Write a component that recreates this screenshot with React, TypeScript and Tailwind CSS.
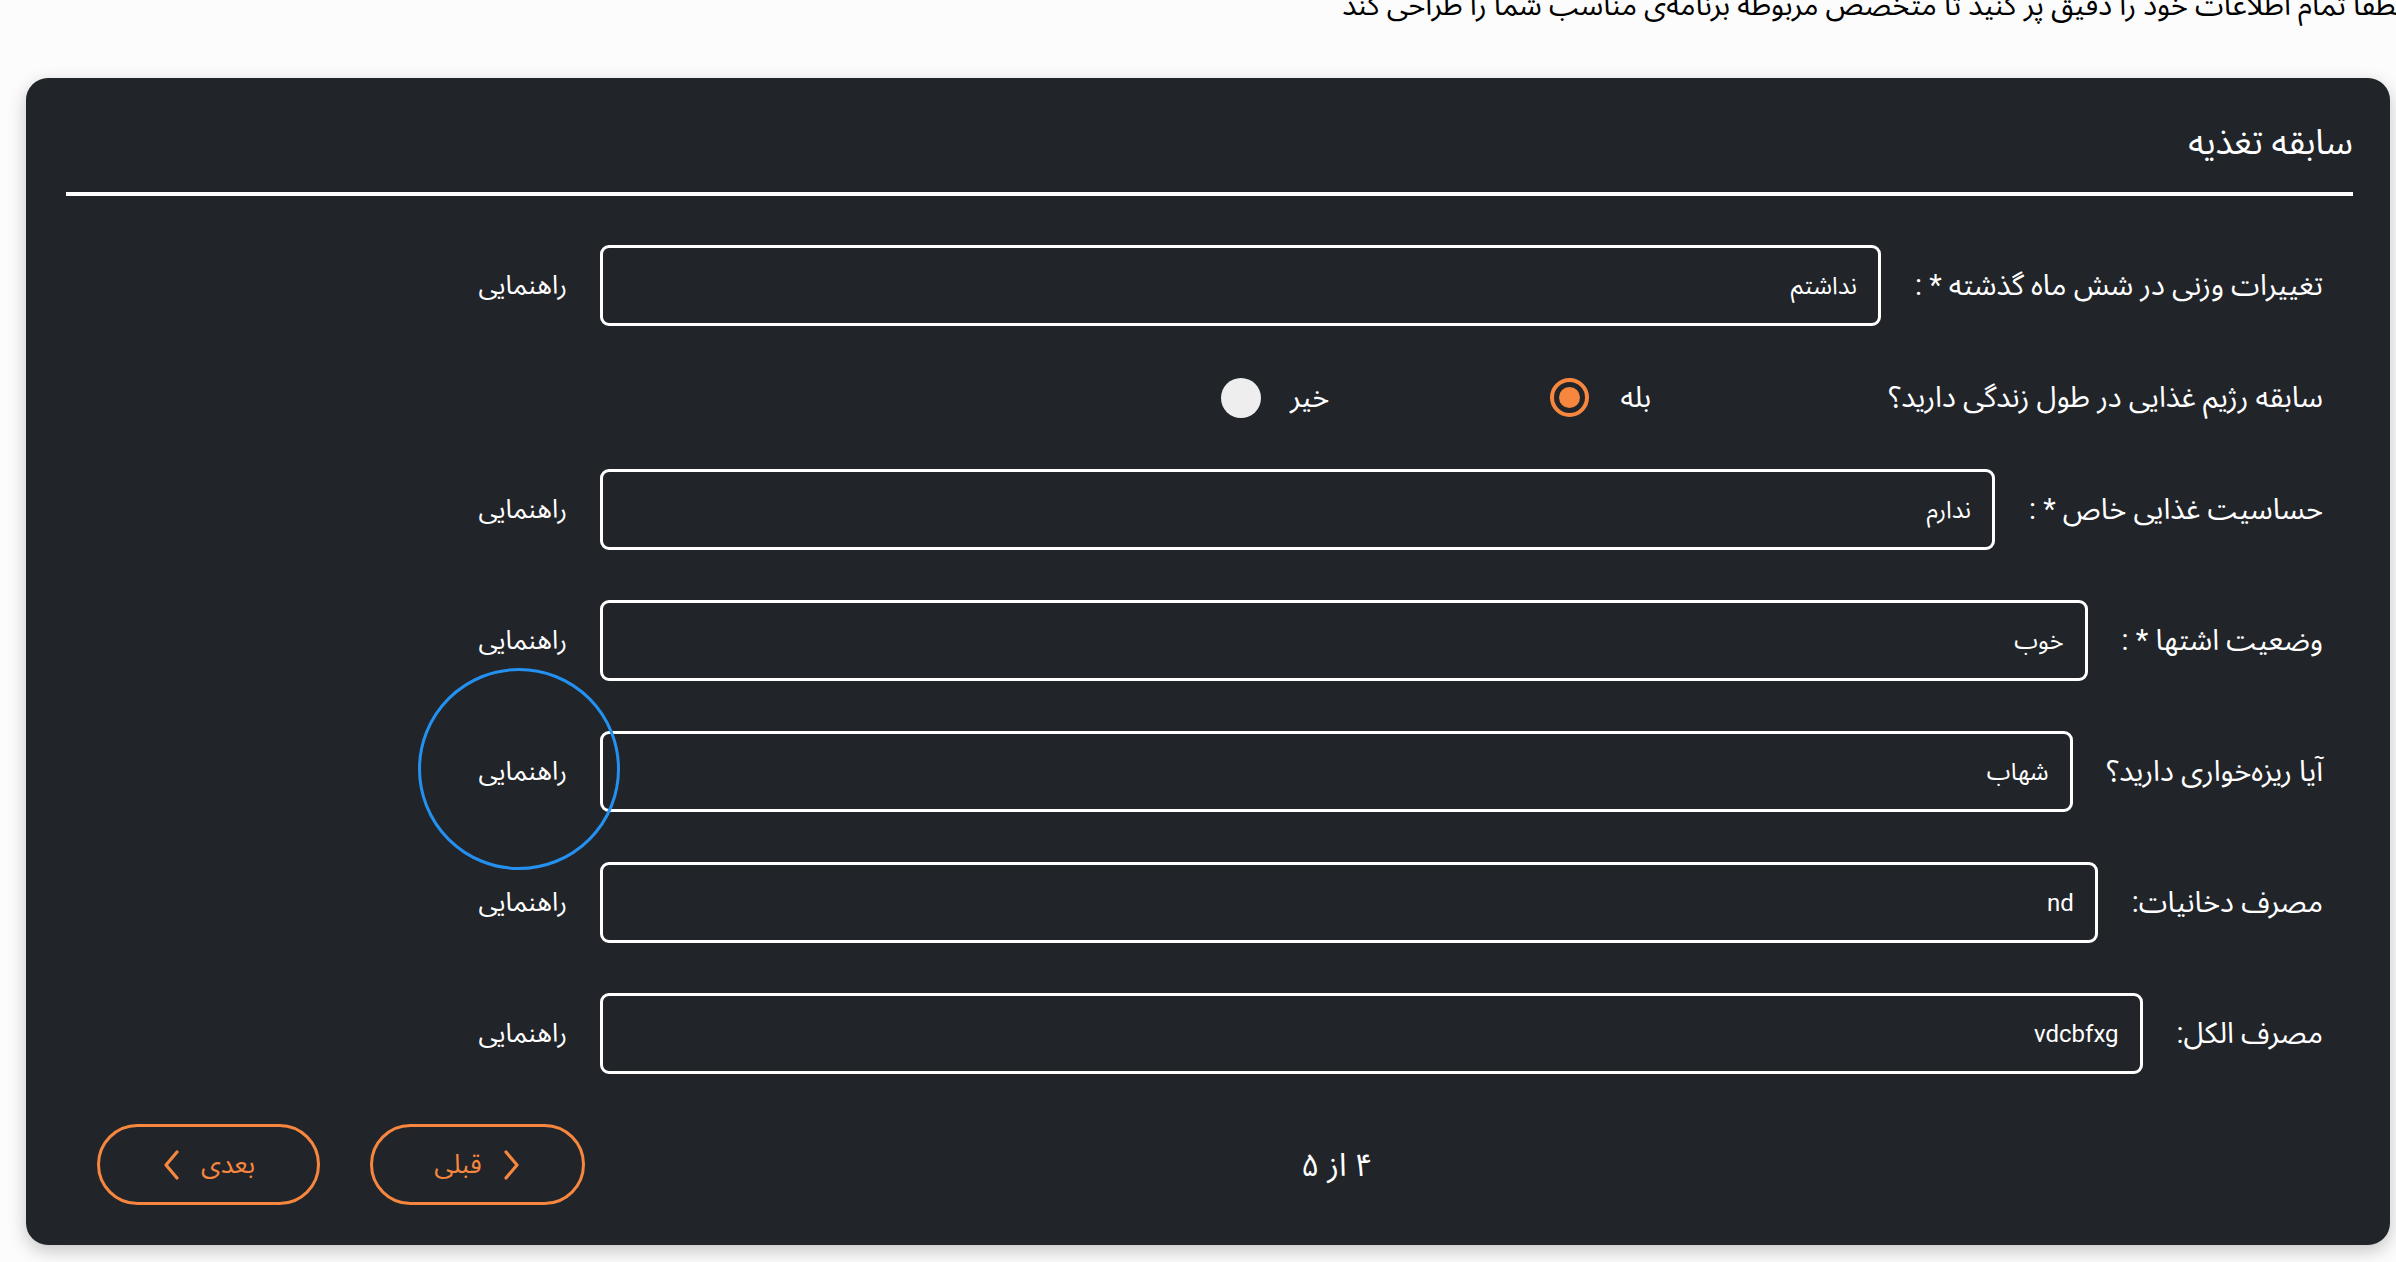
import React from 'react';

const rows = [
    { label: 'تغییرات وزنی در شش ماه گذشته * :', value: 'نداشتم' },
    { label: 'حساسیت غذایی خاص * :', value: 'ندارم' },
    { label: 'وضعیت اشتها * :', value: 'خوب' },
    { label: 'آیا ریزه‌خواری دارید؟', value: 'شهاب' },
    { label: 'مصرف دخانیات:', value: 'nd' },
    { label: 'مصرف الکل:', value: 'vdcbfxg' },
];

const font = 'font-["Roboto","Noto_Sans_Arabic","DejaVu_Sans",sans-serif]';

function Chevron({ dir }: { dir: 'left' | 'right' }) {
    return (
        <svg width="19" height="30" viewBox="0 0 19 30" fill="none">
            <polyline
                points={dir === 'left' ? '15,2 4,15 15,28' : '4,2 15,15 4,28'}
                stroke="#f7873f"
                strokeWidth="3.2"
                strokeLinecap="round"
                strokeLinejoin="round"
            />
        </svg>
    );
}

function InputRow({ label, value }: { label: string; value: string }) {
    return (
        <div className="flex items-center pr-[30px] pl-[373px] mb-[50px]">
            <label className="shrink-0 text-[29px] text-white whitespace-nowrap">{label}</label>
            <div className="flex-1 mr-[34px] h-[81px] border-[3px] border-white rounded-[9px] flex items-center pr-[21px] text-[24px] text-white">
                {value}
            </div>
            <div className="w-[128px] mr-[33px] text-[26px] text-white whitespace-nowrap">راهنمایی</div>
        </div>
    );
}

export default function App() {
    return (
        <div dir="rtl" className={`h-[1262px] overflow-hidden bg-[#fcfcfc] ${font}`}>
            <p className="-mt-[17px] -mr-[8px] text-[29px] leading-[44px] text-black whitespace-nowrap">
                لطفا تمام اطلاعات خود را دقیق پر کنید تا متخصص مربوطه برنامه‌ی مناسب شما را طراحی کند
            </p>

            <div className="relative mt-[51px] mr-[6px] ml-[26px] h-[1167px] rounded-[22px] bg-[#212429] pr-[37px] pl-[40px] pt-[40px] shadow-[0_6px_18px_rgba(0,0,0,0.22)]">
                <h2 className="text-[35px] leading-[50px] text-white">سابقه تغذیه</h2>
                <div className="mt-[24px] h-[4px] bg-white" />

                <div className="pt-[49px]">
                    <InputRow {...rows[0]} />

                    <div className="flex items-center pr-[30px] h-[43px] mb-[50px]">
                        <label className="w-[672px] shrink-0 text-[29px] text-white whitespace-nowrap">
                            سابقه رژیم غذایی در طول زندگی دارید؟
                        </label>
                        <div className="flex items-center gap-[31px]">
                            <span className="text-[29px] text-white">بله</span>
                            <span className="w-[39px] h-[39px] rounded-full border-[4px] border-[#f7873f] flex items-center justify-center">
                                <span className="w-[21px] h-[21px] rounded-full bg-[#f7873f]" />
                            </span>
                        </div>
                        <div className="flex items-center gap-[29px] mr-[221px]">
                            <span className="text-[29px] text-white">خیر</span>
                            <span className="w-[40px] h-[40px] rounded-full bg-[#eeeeee]" />
                        </div>
                    </div>

                    {rows.slice(1).map((r) => (
                        <InputRow key={r.label} {...r} />
                    ))}
                </div>

                <div dir="ltr" className="flex items-center pl-[31px]">
                    <button className="w-[223px] h-[81px] rounded-full border-[3px] border-[#f7873f] flex items-center justify-center gap-[20px] text-[26px] text-[#f7873f]">
                        <Chevron dir="left" />
                        <span>بعدی</span>
                    </button>
                    <button className="ml-[50px] w-[215px] h-[81px] rounded-full border-[3px] border-[#f7873f] flex items-center justify-center gap-[20px] text-[26px] text-[#f7873f]">
                        <span>قبلی</span>
                        <Chevron dir="right" />
                    </button>
                    <span dir="rtl" className="ml-[716px] text-[32px] text-white">۴ از ۵</span>
                </div>

                <div className="absolute left-[392px] top-[590px] w-[202px] h-[202px] rounded-full border-[3px] border-[#2490f0]" />
            </div>
        </div>
    );
}
